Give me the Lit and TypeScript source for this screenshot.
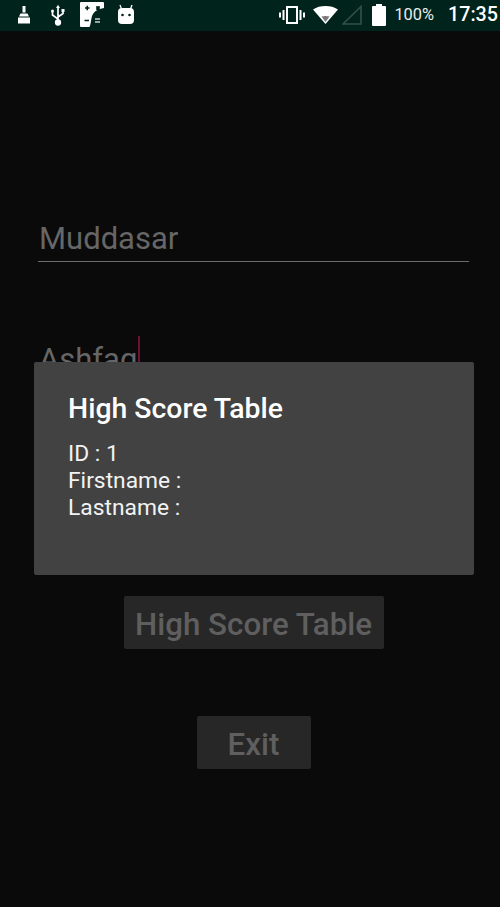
import { LitElement, html, css } from "lit";
import { customElement } from "lit/decorators.js";

@customElement("app-root")
export class AppRoot extends LitElement {
  static styles = css`
    :host { display: block; width: 500px; height: 907px; position: relative; overflow: hidden; background: #0a0a0a; font-family: Roboto, "Liberation Sans", sans-serif; }
    .status { height: 31px; background: #00231c; display: flex; align-items: center; color: #fff; padding: 0 2px 2px 16px; box-sizing: border-box; }
    .status svg { display: block; flex: none; }
    .left { display: flex; align-items: center; gap: 15px; }
    .right { margin-left: auto; display: flex; align-items: center; }
    .pct { font-size: 16.400px; margin-left: 8px; color: #e8eeec; }
    .time { font-size: 19.700px; font-weight: 500; margin-left: 14px; }
    .form { padding: 191px 31px 0 38px; display: flex; flex-direction: column; }
    .field { height: 39px; font-size: 31px; line-height: 33px; color: #666; border-bottom: 1px solid #6c6c6c; display: flex; align-items: flex-start; }
    .text { padding-left: 1px; }
    .field.second { margin-top: 81px; border: none; height: 35px; }
    .caret { width: 2px; height: 30px; background: #6e0f33; margin-top: -7px; }
    .btns { display: flex; flex-direction: column; align-items: center; margin-top: 218px; gap: 67px; }
    .btn { height: 53px; padding-top: 3px; border-radius: 2px; background: #272727; color: #5f5f5f; font-size: 31.300px; font-weight: 500; display: flex; align-items: center; justify-content: center; box-sizing: border-box; }
    .b1 { width: 260px; }
    .b2 { width: 114px; }
    .dialog { position: absolute; left: 34px; top: 362px; width: 440px; height: 213px; background: #424242; border-radius: 2px; box-sizing: border-box; padding: 30px 34px; color: #fff; }
    .title { font-size: 28.400px; font-weight: 500; line-height: 34px; }
    .body { margin-top: 14px; font-size: 22.800px; line-height: 27px; color: #f2f2f2; }
  `;

  render() {
    return html`
      <div class="status">
        <div class="left">
          <svg width="16" height="20" viewBox="0 0 16 20" fill="#fff"><path d="M6.500 1h3v6.500h-3zM4.500 8.500h7l1.500 3H3zM2 12.500h12V18.500H2z"/></svg>
          <svg width="16" height="22" viewBox="0 0 16 22" fill="none" stroke="#fff" stroke-width="1.700" style="margin-left:3px"><path d="M8 3v15M8 15 2.500 11V8M8 13l5-3.500V7"/><circle cx="8" cy="18.500" r="2.300" fill="#fff"/><path d="M8 .8 10 4H6z" fill="#fff" stroke="none"/><circle cx="2.500" cy="7" r="1.500" fill="#fff" stroke="none"/><rect x="11.500" y="5" width="3" height="3" fill="#fff" stroke="none"/></svg>
          <svg width="25" height="25" viewBox="0 0 25 25" style="margin-left:-1px"><path d="M1 0h22a1 1 0 0 1 1 1v5c-6 1-10 3-12 8-1 3-1 7-2 10-.200.700-.500 1-1 1H1a1 1 0 0 1-1-1V1a1 1 0 0 1 1-1z" fill="#fff"/><path d="M5 6h4.500M7.250 3.750v4.500M16.500 4.500l3 3M19.500 4.500l-3 3" stroke="#00231c" stroke-width="1.500"/><path d="M16.500 4.500l3 3M19.500 4.500l-3 3" stroke="#00231c" stroke-width="1.500"/><path d="M4.500 18.500h4.500" stroke="#00231c" stroke-width="1.500"/><path d="M15 17h5M15 20h5" stroke="#c8d2cf" stroke-width="1.500"/></svg>
          <svg width="18" height="21" viewBox="0 0 18 21" style="margin-left:-3px"><path d="M3 1l1.500 4M15 1l-1.500 4" stroke="#fff" stroke-width="1.300"/><rect x="1" y="4" width="16" height="16" rx="4" fill="#fff"/><circle cx="5.500" cy="11" r="1.300" fill="#00231c"/><circle cx="12.500" cy="11" r="1.300" fill="#00231c"/></svg>
        </div>
        <div class="right">
          <svg width="26" height="20" viewBox="0 0 26 20" fill="#fff"><path d="M8 2h10v16H8z" fill="none" stroke="#fff" stroke-width="2"/><rect x="3.500" y="5" width="2" height="10"/><rect x="20.500" y="5" width="2" height="10"/><rect x="0" y="7.500" width="2" height="5"/><rect x="24" y="7.500" width="2" height="5"/></svg>
          <svg width="25" height="18" viewBox="0 0 25 18" style="margin-left:8px"><path d="M0 3.500C3.500 1 8 0 12.500 0S21.500 1 25 3.500L12.500 18z" fill="#fff"/><path d="M8.500 10.500C10.800 9.800 14.200 9.800 16.500 10.500L12.500 16z" fill="#7a7a7a"/></svg>
          <svg width="20" height="20" viewBox="0 0 20 20" style="margin-left:4px" fill="none"><path d="M1 19 19 1.500V19z" stroke="#335048" stroke-width="1.600"/></svg>
          <svg width="14" height="22" viewBox="0 0 14 22" style="margin-left:10px" fill="#fff"><path d="M4 0h6v2h3a1 1 0 0 1 1 1v18a1 1 0 0 1-1 1H1a1 1 0 0 1-1-1V3a1 1 0 0 1 1-1h3z"/></svg>
          <span class="pct">100%</span>
          <span class="time">17:35</span>
        </div>
      </div>
      <div class="form">
        <div class="field"><span class="text">Muddasar</span></div>
        <div class="field second"><span class="text">Ashfaq</span><span class="caret"></span></div>
        <div class="btns">
          <div class="btn b1">High Score Table</div>
          <div class="btn b2">Exit</div>
        </div>
      </div>
      <div class="dialog">
        <div class="title">High Score Table</div>
        <div class="body">ID : 1<br />Firstname :<br />Lastname :</div>
      </div>
    `;
  }
}
